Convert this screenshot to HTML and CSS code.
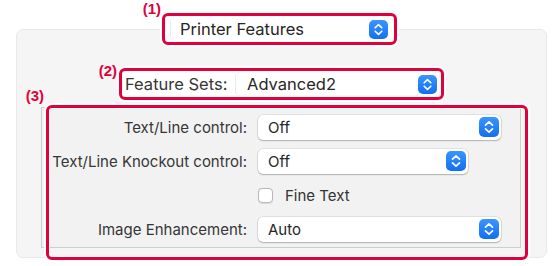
FILE: index.html
```html
<!DOCTYPE html>
<html>
<head>
<meta charset="utf-8">
<link rel="stylesheet" href="styles.css">
</head>
<body>
<div class="page">
  <div class="head">
    <div class="frame f1">
      <span class="tag">(1)</span>
      <div class="popup pop-head">
        <span class="val">Printer Features</span>
        <span class="step"><svg viewBox="0 0 20 20" width="19" height="19"><path d="M6.5 8.2 L10 4.8 L13.5 8.2 M6.5 11.8 L10 15.2 L13.5 11.8" fill="none" stroke="#fff" stroke-width="1.7" stroke-linecap="round" stroke-linejoin="round"/></svg></span>
      </div>
    </div>
  </div>
  <div class="panel">
    <div class="frame f2">
      <span class="tag">(2)</span>
      <span class="lbl">Feature Sets:</span>
      <div class="popup pop-sets">
        <span class="val">Advanced2</span>
        <span class="step"><svg viewBox="0 0 20 20" width="19" height="19"><path d="M6.5 8.2 L10 4.8 L13.5 8.2 M6.5 11.8 L10 15.2 L13.5 11.8" fill="none" stroke="#fff" stroke-width="1.7" stroke-linecap="round" stroke-linejoin="round"/></svg></span>
      </div>
    </div>
    <div class="group">
      <div class="frame f3"><span class="tag">(3)</span></div>
      <span class="lbl">Text/Line control:</span>
      <div class="popup pop-row pop-wide">
        <span class="val">Off</span>
        <span class="step"><svg viewBox="0 0 20 20" width="20" height="20"><path d="M6.5 8.2 L10 4.8 L13.5 8.2 M6.5 11.8 L10 15.2 L13.5 11.8" fill="none" stroke="#fff" stroke-width="1.7" stroke-linecap="round" stroke-linejoin="round"/></svg></span>
      </div>
      <span class="lbl">Text/Line Knockout control:</span>
      <div class="popup pop-row pop-mid">
        <span class="val">Off</span>
        <span class="step"><svg viewBox="0 0 20 20" width="20" height="20"><path d="M6.5 8.2 L10 4.8 L13.5 8.2 M6.5 11.8 L10 15.2 L13.5 11.8" fill="none" stroke="#fff" stroke-width="1.7" stroke-linecap="round" stroke-linejoin="round"/></svg></span>
      </div>
      <span class="lbl"></span>
      <label class="check"><span class="box"></span><span class="ctext">Fine Text</span></label>
      <span class="lbl">Image Enhancement:</span>
      <div class="popup pop-row pop-wide">
        <span class="val">Auto</span>
        <span class="step"><svg viewBox="0 0 20 20" width="20" height="20"><path d="M6.5 8.2 L10 4.8 L13.5 8.2 M6.5 11.8 L10 15.2 L13.5 11.8" fill="none" stroke="#fff" stroke-width="1.7" stroke-linecap="round" stroke-linejoin="round"/></svg></span>
      </div>
    </div>
  </div>
</div>
</body>
</html>
```

FILE: styles.css
```css
* { box-sizing: border-box; }
html, body { margin: 0; padding: 0; background: #fff; }
body {
  font-family: Inter, "Liberation Sans", sans-serif;
  font-size: 15px;
  color: #333;
}
.page {
  width: 559px;
  height: 266px;
  padding-top: 13px;
  overflow: hidden;
}
.head {
  position: relative;
  z-index: 2;
  display: flex;
  justify-content: center;
}
.frame {
  position: relative;
  border: 3px solid #e1003b;
  border-radius: 6px;
  box-shadow: 0 0 0 2px #fff;
}
.tag {
  position: absolute;
  font-family: "Liberation Sans", Arial, sans-serif;
  font-weight: bold;
  font-size: 15px;
  line-height: 16px;
  color: #e1003b;
  white-space: nowrap;
}
.f1 {
  width: 235px;
  height: 32px;
  background: #fff;
  padding: 1px 3px 1px 6px;
  display: flex;
  align-items: center;
  font-size: 16.5px;
}
.f1 .tag { right: calc(100% + 4px); bottom: calc(100% - 1px); }
.popup {
  display: flex;
  align-items: center;
  background: #fff;
  border-radius: 5px;
  color: #262626;
}
.popup .val { flex: 1; }
.step {
  display: flex;
  align-items: center;
  justify-content: center;
  border-radius: 5px;
  background: linear-gradient(#3a95ff, #136fef);
}
.step svg { display: block; }
.pop-head {
  width: 220px;
  height: 24px;
  padding: 0 3px 0 9px;
  box-shadow: -1px 0 0 rgba(0,0,0,0.08);
}
.pop-head .step, .pop-sets .step { width: 19px; height: 19px; }
.panel {
  position: relative;
  z-index: 1;
  margin: -16px 0 0 16px;
  width: 531px;
  height: 229px;
  background: #f5f5f5;
  border: 1px solid #e9e9e9;
  border-radius: 7px;
  padding-top: 38px;
}
.f2 {
  width: 325px;
  height: 32px;
  margin: 0 auto;
  background: #fff;
  padding: 1px 1px 1px 3px;
  display: flex;
  align-items: center;
  font-size: 16.5px;
}
.f2 .tag { right: calc(100% + 5px); bottom: calc(100% - 8px); }
.lbl {
  color: #363636;
  white-space: nowrap;
}
.pop-sets {
  margin-left: auto;
  width: 204px;
  height: 24px;
  padding: 0 3px 0 11px;
  box-shadow: -1px 0 0 rgba(0,0,0,0.08);
}
.group {
  position: relative;
  margin: 7px 0 0 24px;
  width: 480px;
  height: 141px;
  background: #f2f2f2;
  border: 1px solid #cdcdcd;
  padding: 6px 0 5px 0;
  display: grid;
  grid-template-columns: 205px auto;
  grid-auto-rows: 26px;
  row-gap: 8px;
  column-gap: 11px;
  align-items: center;
  justify-items: start;
}
.group .lbl { justify-self: end; }
.f3 {
  position: absolute;
  left: 4px;
  top: -3px;
  right: -8px;
  bottom: -13px;
  box-shadow: 0 0 0 2px #fff, inset 0 0 0 1px #fff;
  z-index: 3;
}
.f3 .tag { right: calc(100% + 5px); bottom: calc(100% + 4px); }
.pop-row {
  height: 25px;
  padding: 0 2px 0 10px;
  box-shadow: 0 0 0 0.5px rgba(0,0,0,0.14), 0 1px 1.5px rgba(0,0,0,0.22);
}
.pop-row .step { width: 20px; height: 20px; }
.pop-wide { width: 243px; }
.pop-mid { width: 210px; }
.check {
  display: flex;
  align-items: center;
  color: #333;
}
.box {
  width: 15px;
  height: 15px;
  background: #fff;
  border: 1px solid #b9b9b9;
  border-radius: 4px;
  box-shadow: 0 0.5px 1px rgba(0,0,0,0.1);
  margin-right: 12px;
}
```
